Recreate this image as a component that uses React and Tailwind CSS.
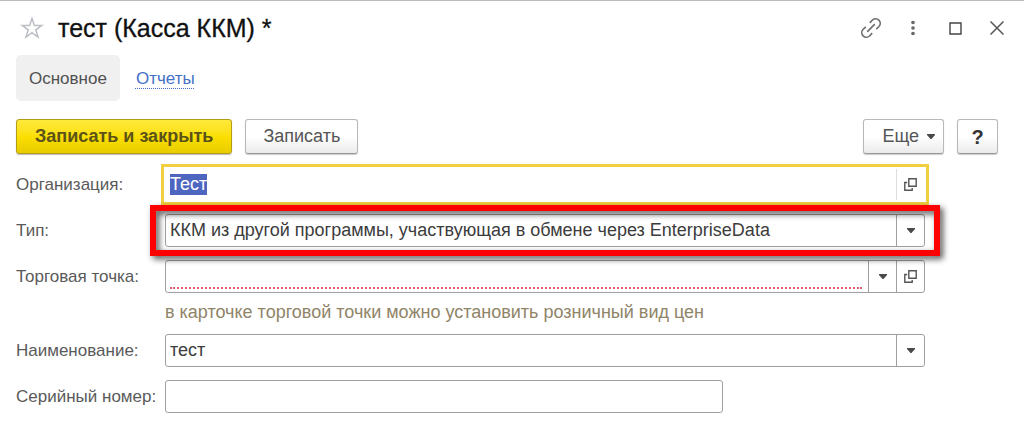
import React, { useEffect, useRef } from 'react';

const ArrowIcon = () => (
  <svg width="8" height="5" viewBox="0 0 8 5" fill="#4a4a4a" aria-hidden="true">
    <path d="M0 0h8v1L4.500 5h-1L0 1z" />
  </svg>
);

const OpenIcon = () => (
  <svg width="13" height="13" viewBox="0 0 13 13" fill="none" stroke="#555" strokeWidth="1.4" aria-hidden="true">
    <path d="M4.800 .8h7.400v7.400H4.800z" />
    <path d="M3.200 4.500H.8v7.700h7.400V10" />
  </svg>
);

const StarIcon = () => (
  <svg width="24" height="24" viewBox="0 0 24 24" fill="none" stroke="#b9bdc4" strokeWidth="1.5" aria-hidden="true">
    <path d="M12 2.5l2.4 7h7.3l-5.9 4.4 2.2 7.1-6-4.3L6 21l2.2-7.1L2.300 9.500h7.300z" />
  </svg>
);

const LinkIcon = () => (
  <svg width="22" height="22" viewBox="0 0 22 22" fill="none" stroke="#707070" strokeWidth="1.700" aria-hidden="true">
    <path d="M7.200 14.800l7.600-7.600" />
    <path d="M9.800 5.800l2.700-2.800a4.600 4.600 0 0 1 6.500 6.500l-2.800 2.700" />
    <path d="M12.200 16.200l-2.700 2.800a4.600 4.600 0 0 1-6.500-6.500l2.800-2.700" />
  </svg>
);

const DotsIcon = () => (
  <svg width="4" height="16" viewBox="0 0 4 16" fill="#666" aria-hidden="true">
    <circle cx="2" cy="2.500" r="1.800" />
    <circle cx="2" cy="8" r="1.800" />
    <circle cx="2" cy="13.500" r="1.800" />
  </svg>
);

const MaximizeIcon = () => (
  <svg width="13" height="13" viewBox="0 0 13 13" fill="none" stroke="#444" strokeWidth="1.400" aria-hidden="true">
    <path d="M1 1h11v11H1z" />
  </svg>
);

const CloseIcon = () => (
  <svg width="14" height="14" viewBox="0 0 14 14" fill="none" stroke="#555" strokeWidth="1.500" aria-hidden="true">
    <path d="M.5 .5l13 13M13.500 .5l-13 13" />
  </svg>
);

const IconButton = ({ label, children }) => (
  <button type="button" aria-label={label} className="flex w-6 h-6 items-center justify-center">
    {children}
  </button>
);

const FieldButton = ({ label, light, children }) => (
  <button
    type="button"
    aria-label={label}
    className={`flex w-7 shrink-0 items-center justify-center border-l ${light ? 'border-[#ddd]' : 'border-[#a0a0a0]'}`}
  >
    {children}
  </button>
);

const Row = ({ id, label, children }) => (
  <div className="flex items-center">
    <label htmlFor={id} className="w-[149px] shrink-0 whitespace-nowrap text-[17px] text-[#5a5a5a]">
      {label}
    </label>
    {children}
  </div>
);

const box = 'flex h-[33px] flex-1 rounded-[3px] border border-[#a0a0a0] bg-white';
const input = 'min-w-0 flex-1 bg-transparent px-1 text-[#3c3c3c] outline-none';
const button = 'h-[35px] rounded-[3px] border border-[#b8b8b8] border-b-[#999] bg-linear-to-b from-white from-50% to-[#ebebeb] text-[#555] shadow-[0_1px_1px_#0003]';

const Header = () => (
  <header className="-mr-[11px] flex items-center justify-between">
    <div className="flex items-center gap-[14px]">
      <button type="button" aria-label="Избранное" className="ml-1">
        <StarIcon />
      </button>
      <h1 className="text-[25px] leading-8 text-[#111] [-webkit-text-stroke:0.3px_#111]">тест (Касса ККМ) *</h1>
    </div>
    <div className="flex items-center gap-[18px]">
      <IconButton label="Получить ссылку"><LinkIcon /></IconButton>
      <IconButton label="Меню"><DotsIcon /></IconButton>
      <IconButton label="Развернуть"><MaximizeIcon /></IconButton>
      <IconButton label="Закрыть"><CloseIcon /></IconButton>
    </div>
  </header>
);

const Tabs = () => (
  <nav className="mt-[11px] flex h-[46px] items-center gap-4 text-[17px]">
    <a href="#main" className="flex h-full items-center rounded-[5px] bg-[#f0f0f0] px-[13px] text-[#505050]">
      Основное
    </a>
    <a href="#reports" className="text-[#4470c8] underline decoration-dotted decoration-1 underline-offset-4">
      Отчеты
    </a>
  </nav>
);

const Toolbar = () => (
  <div className="mt-[18px] flex gap-[13px]">
    <button
      type="submit"
      className="h-[35px] rounded-[3px] border border-[#b39d12] bg-linear-to-b from-[#ffe93a] via-[#fbdf00] to-[#e8cc00] px-[18px] font-bold text-[#5a5218] shadow-[0_1px_1px_#0004]"
    >
      Записать и закрыть
    </button>
    <button type="button" className={`${button} px-[17px]`}>Записать</button>
    <button type="button" className={`${button} ml-auto flex items-center gap-2 pl-[18px] pr-2`}>
      Еще
      <ArrowIcon />
    </button>
    <button type="button" aria-label="Справка" className={`${button} w-[41px] text-xl font-bold`}>
      <span className="text-[#333]">?</span>
    </button>
  </div>
);

const App = () => {
  const orgRef = useRef(null);

  useEffect(() => {
    orgRef.current.focus();
    orgRef.current.select();
  }, []);

  return (
    <form
      onSubmit={(e) => e.preventDefault()}
      className="border-t border-[#bbb] bg-white pl-4 pr-[26px] pt-[11px] font-['Liberation_Sans',Arial,sans-serif] text-lg leading-[21px]"
    >
      <Header />
      <Tabs />
      <Toolbar />

      <div className="mt-[14px] flex flex-col gap-[13px] pr-[73px]">
        <Row id="org" label="Организация:">
          <div className="flex h-[33px] flex-1 border border-transparent outline-[3px] outline-offset-1 outline-[#f2cf3f]">
            <input
              id="org"
              ref={orgRef}
              defaultValue="Тест"
              className={`${input} selection:bg-[#4f66c0] selection:text-white`}
            />
            <FieldButton label="Открыть организацию" light><OpenIcon /></FieldButton>
          </div>
        </Row>

        <Row id="type" label="Тип:">
          <div className={`${box} relative`}>
            <select id="type" className={`${input} appearance-none`}>
              <option>ККМ из другой программы, участвующая в обмене через EnterpriseData</option>
            </select>
            <span className="pointer-events-none absolute inset-y-0 right-0 flex w-7 items-center justify-center border-l border-[#a0a0a0]">
              <ArrowIcon />
            </span>
            {/* red callout around the field */}
            <div className="pointer-events-none absolute -inset-x-4 -inset-y-2.5 border-[6px] border-[#fe0000] drop-shadow-[3px_3px_3px_#000000b0]" />
          </div>
        </Row>

        <Row id="outlet" label="Торговая точка:">
          <div className={box}>
            <div className="flex min-w-0 flex-1 pb-[3px] pl-1 pr-[6px]">
              <input
                id="outlet"
                className="min-w-0 flex-1 border-b-2 border-dotted border-[#e0606a] bg-transparent text-[#3c3c3c] outline-none"
              />
            </div>
            <FieldButton label="Выбрать точку"><ArrowIcon /></FieldButton>
            <FieldButton label="Открыть точку"><OpenIcon /></FieldButton>
          </div>
        </Row>

        <p className="-mt-1 -mb-0.5 ml-[149px] text-[#8f8468]">
          в карточке торговой точки можно установить розничный вид цен
        </p>

        <Row id="name" label="Наименование:">
          <div className={box}>
            <input id="name" defaultValue="тест" className={input} />
            <FieldButton label="Выбрать наименование"><ArrowIcon /></FieldButton>
          </div>
        </Row>

        <Row id="serial" label="Серийный номер:">
          <div className={`${box} max-w-[558px]`}>
            <input id="serial" className={input} />
          </div>
        </Row>
      </div>
    </form>
  );
};

export default App;
